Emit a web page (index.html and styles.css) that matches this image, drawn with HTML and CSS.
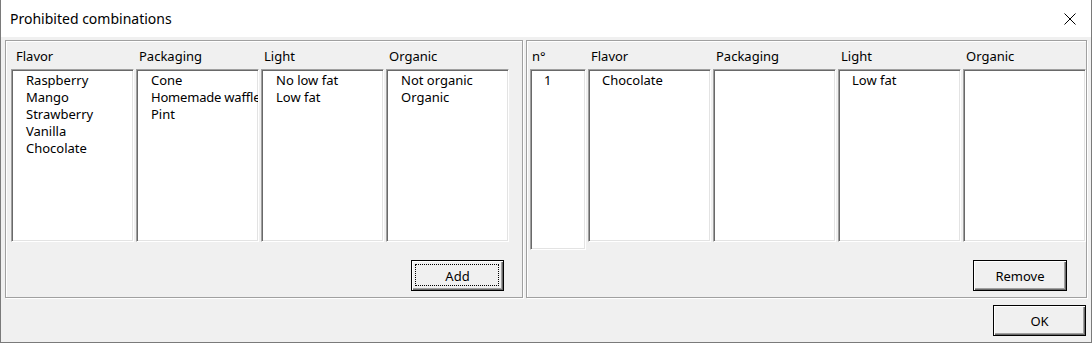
FILE: index.html
```html
<!DOCTYPE html>
<html lang="en">
<head>
    <meta charset="UTF-8">
    <title>Prohibited combinations</title>
    <link rel="stylesheet" href="styles.css">
</head>
<body>

    <div class="window">
        <!-- Title bar -->
        <div class="titlebar">
            <span class="title">Prohibited combinations</span>
            <span class="close">
                <svg width="12" height="12" viewBox="0 0 12 12">
                    <path d="M0.5 0.5 L11.5 11.5 M11.5 0.5 L0.5 11.5" stroke="#000" stroke-width="1" fill="none"/>
                </svg>
            </span>
        </div>

        <div class="client">
            <div class="panels">

                <!-- Available values -->
                <div class="panel panel-left">
                    <div class="cols cols-left">
                        <div class="col">
                            <div class="col-head first">Flavor</div>
                            <div class="listbox">
                                <div class="item">Raspberry</div>
                                <div class="item">Mango</div>
                                <div class="item">Strawberry</div>
                                <div class="item">Vanilla</div>
                                <div class="item">Chocolate</div>
                            </div>
                        </div>
                        <div class="col">
                            <div class="col-head">Packaging</div>
                            <div class="listbox">
                                <div class="item">Cone</div>
                                <div class="item narrow">Homemade waffle</div>
                                <div class="item">Pint</div>
                            </div>
                        </div>
                        <div class="col">
                            <div class="col-head">Light</div>
                            <div class="listbox">
                                <div class="item">No low fat</div>
                                <div class="item">Low fat</div>
                            </div>
                        </div>
                        <div class="col">
                            <div class="col-head">Organic</div>
                            <div class="listbox">
                                <div class="item">Not organic</div>
                                <div class="item">Organic</div>
                            </div>
                        </div>
                    </div>
                    <div class="panel-foot">
                        <button class="btn focused">Add</button>
                    </div>
                </div>

                <!-- Prohibited list -->
                <div class="panel panel-right">
                    <div class="cols cols-right">
                        <div class="col">
                            <div class="col-head tight">n°</div>
                            <div class="listbox tall">
                                <div class="item">1</div>
                            </div>
                        </div>
                        <div class="col">
                            <div class="col-head">Flavor</div>
                            <div class="listbox">
                                <div class="item">Chocolate</div>
                            </div>
                        </div>
                        <div class="col">
                            <div class="col-head">Packaging</div>
                            <div class="listbox"></div>
                        </div>
                        <div class="col">
                            <div class="col-head">Light</div>
                            <div class="listbox">
                                <div class="item">Low fat</div>
                            </div>
                        </div>
                        <div class="col">
                            <div class="col-head">Organic</div>
                            <div class="listbox"></div>
                        </div>
                    </div>
                    <div class="panel-foot">
                        <button class="btn">Remove</button>
                    </div>
                </div>

            </div>

            <div class="dialog-foot">
                <button class="btn">OK</button>
            </div>
        </div>
    </div>

</body>
</html>
```

FILE: styles.css
```css
/* General styling */
body {
    margin: 0;
    font-family: "Noto Sans", "DejaVu Sans", sans-serif;
    font-size: 13px;
    color: #000;
    background-color: #fff;
}

.window {
    width: 1092px;
    height: 343px;
    box-sizing: border-box;
    border: 1px solid #7a7a7a;
    border-top: none;
    display: flex;
    flex-direction: column;
}

/* Title bar */
.titlebar {
    height: 37px;
    flex-shrink: 0;
    display: flex;
    align-items: center;
    background-color: #fff;
    padding-left: 9px;
}

.title {
    flex: 1;
    font-size: 14px;
}

.close {
    width: 43px;
    height: 37px;
    display: flex;
    align-items: center;
    justify-content: center;
}

/* Client area */
.client {
    flex: 1;
    background-color: #f0f0f0;
    padding: 3px 0 0 4px;
}

.panels {
    display: flex;
    gap: 3px;
}

.panel {
    height: 258px;
    box-sizing: border-box;
    border: 1px solid #a0a0a0;
    box-shadow: 1px 1px 0 #fff, inset 1px 1px 0 #fff;
    display: flex;
    flex-direction: column;
}

.panel-left {
    width: 518px;
}

.panel-right {
    width: 561px;
}

.cols {
    display: grid;
    gap: 0 2px;
    align-items: start;
    padding-top: 7px;
}

.cols-left {
    grid-template-columns: repeat(4, 123px);
    padding-left: 5px;
}

.cols-right {
    grid-template-columns: 56px repeat(4, 123px);
    padding-left: 3px;
}

.col-head {
    height: 17px;
    line-height: 17px;
    padding-left: 3px;
    margin-bottom: 4px;
    white-space: nowrap;
}

.col-head.first {
    padding-left: 5px;
}

.col-head.tight {
    padding-left: 2px;
}

/* List boxes */
.listbox {
    height: 173px;
    box-sizing: border-box;
    background-color: #fff;
    border: 1px solid;
    border-color: #a0a0a0 #fff #fff #a0a0a0;
    box-shadow: inset 1px 1px 0 #696969, inset -1px -1px 0 #e3e3e3;
    padding: 2px 0 0 14px;
    overflow: hidden;
}

.cols-right .listbox {
    padding-left: 13px;
}

.listbox.tall {
    height: 181px;
}

.item {
    height: 17px;
    line-height: 17px;
    white-space: nowrap;
}

.item.narrow {
    letter-spacing: -0.2px;
}

/* Buttons */
.panel-foot {
    margin-top: auto;
    display: flex;
    justify-content: flex-end;
    padding: 0 18px 6px 0;
}

.panel-right .panel-foot {
    padding-right: 19px;
}

.btn {
    position: relative;
    width: 93px;
    height: 31px;
    padding: 0;
    font-family: inherit;
    font-size: 13px;
    color: #000;
    background-color: #f0f0f0;
    border: 1px solid #000;
    box-shadow: inset 1px 1px 0 #fff, inset -1px -1px 0 #696969, inset -2px -2px 0 #a0a0a0;
}

.btn.focused::after {
    content: "";
    position: absolute;
    top: 3px;
    left: 3px;
    right: 4px;
    bottom: 4px;
    border: 1px dotted #000;
}

.panel-right .btn {
    width: 94px;
}

.dialog-foot {
    display: flex;
    justify-content: flex-end;
    padding: 7px 5px 0 0;
}
```
